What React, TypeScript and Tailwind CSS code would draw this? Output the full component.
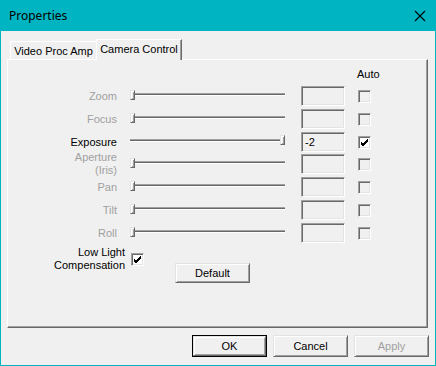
import React from "react";

const sunken =
  "border-t border-l border-r border-b border-t-[#a0a0a0] border-l-[#a0a0a0] border-r-white border-b-white shadow-[inset_1px_1px_0_#696969,inset_-1px_-1px_0_#e3e3e3]";
const raised =
  "border-t border-l border-r border-b border-t-[#e3e3e3] border-l-[#e3e3e3] border-r-[#696969] border-b-[#696969] shadow-[inset_1px_1px_0_#ffffff,inset_-1px_-1px_0_#a0a0a0]";

type Row = {
  label: string[];
  enabled: boolean;
  value?: string;
  checked?: boolean;
  thumbRight?: boolean;
  extra?: string;
};

const rows: Row[] = [
  { label: ["Zoom"], enabled: false },
  { label: ["Focus"], enabled: false },
  { label: ["Exposure"], enabled: true, value: "-2", checked: true, thumbRight: true },
  { label: ["Aperture", "(Iris)"], enabled: false, extra: "-mt-px" },
  { label: ["Pan"], enabled: false },
  { label: ["Tilt"], enabled: false },
  { label: ["Roll"], enabled: false },
];

function Check() {
  return (
    <svg width="9" height="9" viewBox="0 0 9 9" className="block">
      <path d="M1 4 L3 6 L8 1 M1 5 L3 7 L8 2 M1 6 L3 8 L8 3" stroke="#000" strokeWidth="1" fill="none" shapeRendering="crispEdges" />
    </svg>
  );
}

function CheckBox({ checked, enabled }: { checked?: boolean; enabled: boolean }) {
  return (
    <div
      className={`w-[13px] h-[13px] shrink-0 flex items-center justify-center ${sunken} ${
        enabled ? "bg-white" : "bg-[#f0f0f0]"
      }`}
    >
      {checked ? <Check /> : null}
    </div>
  );
}

function Slider({ thumbRight, showThumbLeft }: { thumbRight?: boolean; showThumbLeft: boolean }) {
  return (
    <div className="relative w-[155px] h-[20px] ml-[13px] shrink-0">
      <div className="absolute left-0 right-0 top-[7px] h-[3px] bg-[#696969] border-t border-t-[#a0a0a0] border-b border-b-white" />
      {showThumbLeft && (
        <div className={`absolute left-0 top-[4px] w-[5px] h-[10px] bg-[#f0f0f0] ${raised}`} />
      )}
      {thumbRight && (
        <div className={`absolute right-0 top-[3px] w-[5px] h-[10px] bg-[#f0f0f0] ${raised}`} />
      )}
    </div>
  );
}

function Button({ children, def, disabled, className = "" }: { children: React.ReactNode; def?: boolean; disabled?: boolean; className?: string }) {
  if (def) {
    return (
      <div className={`w-[75px] h-[22px] border border-[#000] ${className}`}>
        <div className={`w-full h-full flex items-center justify-center bg-[#f0f0f0] ${raised} text-black`}>{children}</div>
      </div>
    );
  }
  return (
    <div
      className={`w-[75px] h-[22px] flex items-center justify-center bg-[#f0f0f0] ${raised} ${
        disabled ? "text-[#a0a0a0]" : "text-black"
      } ${className}`}
    >
      {children}
    </div>
  );
}

export default function App() {
  return (
    <div
      className="w-[436px] h-[366px] bg-[#00b4c2] flex flex-col text-[11px] leading-[13px]"
      style={{ fontFamily: '"Liberation Sans", Arial, sans-serif' }}
    >
      <div className="h-[31px] flex items-center justify-between pl-[9px] pr-[10px] shrink-0">
        <span className="text-[12px] text-black" style={{ fontFamily: '"Noto Sans", sans-serif' }}>
          Properties
        </span>
        <svg width="12" height="12" viewBox="0 0 12 12" className="block">
          <path d="M1 1 L11 11 M11 1 L1 11" stroke="#000" strokeWidth="1.1" />
        </svg>
      </div>
      <div className="flex-1 mx-[1px] mb-[1px] bg-[#f0f0f0] flex flex-col pl-[6px] pr-[6px] pt-[8px]">
        {/* Tabs */}
        <div className="relative z-10 flex items-start h-[21px] -mb-px pl-[3px]">
          <div className="mt-[2px] w-[86px] h-[18px] border-t border-l border-white flex items-center justify-center text-black pt-px">
            Video Proc Amp
          </div>
          <div className="w-[86px] h-[21px] bg-[#f0f0f0] border-t border-l border-white border-r border-r-[#696969] shadow-[inset_-1px_0_0_#a0a0a0] flex items-start justify-center pt-[3px] text-black">
            Camera Control
          </div>
        </div>
        {/* Panel */}
        <div className="w-[421px] h-[269px] border-t border-l border-white border-r border-b border-r-[#696969] border-b-[#696969] shadow-[inset_-1px_-1px_0_#a0a0a0] flex flex-col pt-[8px]">
          <div className="h-[13px] ml-[349px] mb-[5px] text-black">Auto</div>
          <div className="flex flex-col gap-[3px]">
            {rows.map((r) => (
              <div key={r.label.join()} className={`flex items-center h-[20px] ${r.extra ?? ""}`}>
                <div className={`w-[109px] text-right shrink-0 ${r.enabled ? "text-black" : "text-[#a0a0a0]"}`}>
                  {r.label.map((l) => (
                    <div key={l}>{l}</div>
                  ))}
                </div>
                <Slider thumbRight={r.thumbRight} showThumbLeft={!r.thumbRight} />
                <div className={`ml-[16px] w-[44px] h-[20px] bg-[#f0f0f0] shrink-0 flex items-center pl-[3px] text-black ${sunken}`}>
                  {r.value}
                </div>
                <div className="ml-[13px]">
                  <CheckBox checked={r.checked} enabled={r.enabled} />
                </div>
              </div>
            ))}
          </div>
          <div className="flex items-start mt-[3px]">
            <div className="flex items-center">
              <div className="w-[117px] text-right text-black">
                <div>Low Light</div>
                <div>Compensation</div>
              </div>
              <div className="ml-[6px]">
                <CheckBox checked enabled />
              </div>
            </div>
            <Button className="ml-[31px] mt-[17px] !h-[20px]">Default</Button>
          </div>
        </div>
        {/* Bottom buttons */}
        <div className="flex justify-end gap-[6px] mt-[7px] pr-0">
          <Button def>OK</Button>
          <Button>Cancel</Button>
          <Button disabled>Apply</Button>
        </div>
      </div>
    </div>
  );
}
